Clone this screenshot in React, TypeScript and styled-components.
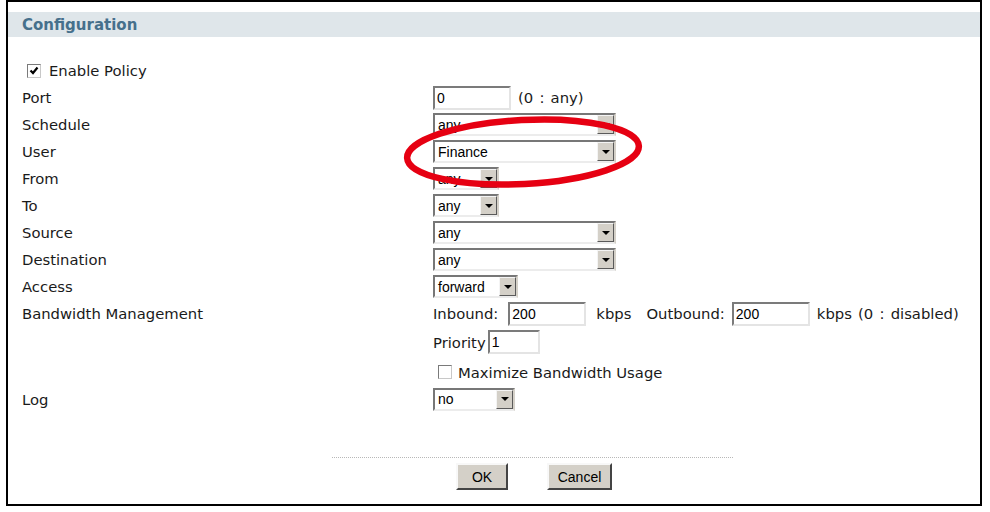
import React from 'react';
import styled, { createGlobalStyle } from 'styled-components';

const GlobalStyle = createGlobalStyle`
  html, body {
    margin: 0;
    padding: 0;
    background: #fff;
  }
`;

const Frame = styled.div`
  position: relative;
  box-sizing: border-box;
  width: 976px;
  height: 506px;
  margin-left: 6px;
  border: 2px solid #000;
  background: #fff;
  font-family: "DejaVu Sans", Verdana, sans-serif;
  color: #1a1a1a;
`;

const Header = styled.div`
  margin-top: 10px;
  height: 25px;
  background: #dfe6ea;
  display: flex;
  align-items: center;
  padding-left: 14px;
  font-weight: bold;
  font-size: 15px;
  color: #46708c;
`;

const Body = styled.div`
  margin-top: 20px;
  padding-left: 14px;
`;

const Row = styled.div<{ $h?: number }>`
  display: flex;
  align-items: center;
  height: ${(p) => p.$h ?? 27}px;
  font-size: 14.8px;
  white-space: nowrap;
`;

const Label = styled.div`
  width: 411px;
  flex-shrink: 0;
`;

const Controls = styled.div`
  display: flex;
  align-items: center;
`;

const Note = styled.span<{ $ml?: number }>`
  margin-left: ${(p) => p.$ml ?? 0}px;
  word-spacing: 1.5px;
`;

const Box = styled.span<{ $ml?: number }>`
  box-sizing: border-box;
  width: 14px;
  height: 14px;
  margin-left: ${(p) => p.$ml ?? 0}px;
  border: 1px solid #7a7a7a;
  border-right-color: #c8c8c8;
  border-bottom-color: #c8c8c8;
  background: #fff;
  display: inline-flex;
  align-items: center;
  justify-content: center;
  flex-shrink: 0;
`;

const CheckText = styled.span<{ $ml: number }>`
  margin-left: ${(p) => p.$ml}px;
`;

const TextInput = styled.input<{ $w: number; $ml?: number }>`
  box-sizing: border-box;
  width: ${(p) => p.$w}px;
  height: 24px;
  margin: 0 0 0 ${(p) => p.$ml ?? 0}px;
  padding: 0 0 0 2px;
  border: 2px solid;
  border-color: #7b7b7b #e4e4e4 #e4e4e4 #7b7b7b;
  background: #fff;
  font-family: "Liberation Sans", Arial, sans-serif;
  font-size: 14px;
  color: #000;
  outline: none;
`;

const SelectBox = styled.div<{ $w: number }>`
  box-sizing: border-box;
  width: ${(p) => p.$w}px;
  height: 23px;
  display: flex;
  border: 2px solid;
  border-color: #777 #d4d0c8 #ececec #777;
  background: #fff;
`;

const SelectText = styled.span`
  flex: 1;
  display: flex;
  align-items: center;
  padding-left: 3px;
  font-family: "Liberation Sans", Arial, sans-serif;
  font-size: 14px;
  color: #000;
`;

const ArrowButton = styled.span`
  box-sizing: border-box;
  width: 17px;
  background: #d4d0c8;
  border: 1px solid;
  border-color: #f4f4f4 #5a5a5a #5a5a5a #f4f4f4;
  display: flex;
  align-items: center;
  justify-content: center;
`;

const Triangle = styled.span`
  width: 0;
  height: 0;
  border-left: 4px solid transparent;
  border-right: 4px solid transparent;
  border-top: 4px solid #000;
`;

const Divider = styled.div`
  margin: 46px 0 0 324px;
  width: 401px;
  border-top: 1px dotted #b8b8b8;
`;

const ButtonRow = styled.div`
  display: flex;
  gap: 39px;
  margin-top: 5px;
  padding-left: 448px;
`;

const Button = styled.button<{ $w: number }>`
  box-sizing: border-box;
  width: ${(p) => p.$w}px;
  height: 27px;
  padding: 0;
  background: #d4d0c8;
  border: 2px solid;
  border-color: #f8f8f8 #444 #444 #f8f8f8;
  font-family: "Liberation Sans", Arial, sans-serif;
  font-size: 14px;
  color: #000;
`;

const Highlight = styled.svg`
  position: absolute;
  left: 392px;
  top: 108px;
  pointer-events: none;
`;

const Select: React.FC<{ value: string; width: number }> = ({ value, width }) => (
  <SelectBox $w={width}>
    <SelectText>{value}</SelectText>
    <ArrowButton>
      <Triangle />
    </ArrowButton>
  </SelectBox>
);

const CheckMark = () => (
  <svg width="10" height="10" viewBox="0 0 10 10">
    <path d="M1.5 4.5 L4 7 L8.5 1.5" fill="none" stroke="#000" strokeWidth="2.2" />
  </svg>
);

const rows: { label: string; value: string; width: number }[] = [
  { label: 'Schedule', value: 'any', width: 183 },
  { label: 'User', value: 'Finance', width: 183 },
  { label: 'From', value: 'any', width: 66 },
  { label: 'To', value: 'any', width: 66 },
  { label: 'Source', value: 'any', width: 183 },
  { label: 'Destination', value: 'any', width: 183 },
  { label: 'Access', value: 'forward', width: 85 },
];

const App: React.FC = () => {
  return (
    <>
      <GlobalStyle />
      <Frame>
        <Header>Configuration</Header>
        <Body>
          <Row>
            <Box $ml={5}>
              <CheckMark />
            </Box>
            <CheckText $ml={8}>Enable Policy</CheckText>
          </Row>
          <Row>
            <Label>Port</Label>
            <Controls>
              <TextInput $w={78} defaultValue="0" />
              <Note $ml={7}>(0 : any)</Note>
            </Controls>
          </Row>
          {rows.map((r) => (
            <Row key={r.label}>
              <Label>{r.label}</Label>
              <Select value={r.value} width={r.width} />
            </Row>
          ))}
          <Row>
            <Label>Bandwidth Management</Label>
            <Controls>
              <span>Inbound:</span>
              <TextInput $w={78} $ml={10} defaultValue="200" />
              <Note $ml={10}>kbps</Note>
              <Note $ml={15}>Outbound:</Note>
              <TextInput $w={78} $ml={7} defaultValue="200" />
              <Note $ml={7}>kbps (0 : disabled)</Note>
            </Controls>
          </Row>
          <Row $h={30}>
            <Label />
            <Controls>
              <span>Priority</span>
              <TextInput $w={52} $ml={2} defaultValue="1" />
            </Controls>
          </Row>
          <Row $h={30}>
            <Label />
            <Controls>
              <Box $ml={5} />
              <CheckText $ml={6}>Maximize Bandwidth Usage</CheckText>
            </Controls>
          </Row>
          <Row $h={24}>
            <Label>Log</Label>
            <Select value="no" width={82} />
          </Row>
        </Body>
        <Divider />
        <ButtonRow>
          <Button $w={52}>OK</Button>
          <Button $w={65}>Cancel</Button>
        </ButtonRow>
        <Highlight width="260" height="90" viewBox="0 0 260 90">
          <ellipse
            cx="123"
            cy="42"
            rx="116"
            ry="32"
            fill="none"
            stroke="#e60012"
            strokeWidth="6.5"
            transform="rotate(-3 123 42)"
          />
        </Highlight>
      </Frame>
    </>
  );
};

export default App;
